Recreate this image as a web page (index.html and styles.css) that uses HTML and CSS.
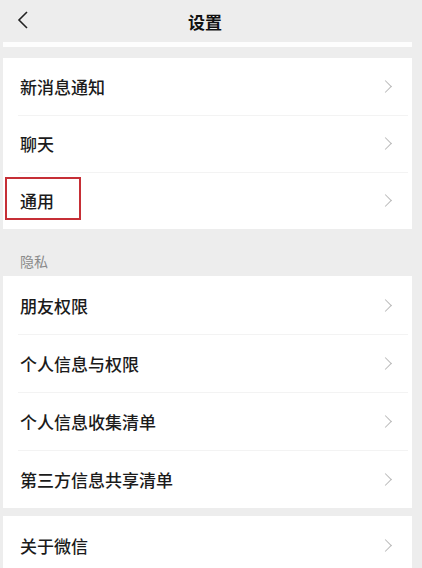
FILE: index.html
```html
<!DOCTYPE html>
<html lang="zh-CN">
<head>
  <meta charset="utf-8">
  <title>设置</title>
  <link rel="stylesheet" href="styles.css">
</head>
<body>
<div class="screen">
  <header class="topbar">
    <span class="back">
      <svg width="12" height="20" viewBox="0 0 12 20"><path d="M10 2 L2 10 L10 18" fill="none" stroke="#222" stroke-width="1.6"/></svg>
    </span>
    <h1>设置</h1>
  </header>
  <div class="strip"></div>

  <section class="card first">
    <div class="row"><span>新消息通知</span><i class="arrow"></i></div>
    <div class="row"><span>聊天</span><i class="arrow"></i></div>
    <div class="row mark"><span>通用</span><i class="arrow"></i><b class="redbox"></b></div>
  </section>

  <div class="label">隐私</div>

  <section class="card tall">
    <div class="row"><span>朋友权限</span><i class="arrow"></i></div>
    <div class="row"><span>个人信息与权限</span><i class="arrow"></i></div>
    <div class="row"><span>个人信息收集清单</span><i class="arrow"></i></div>
    <div class="row"><span>第三方信息共享清单</span><i class="arrow"></i></div>
  </section>

  <section class="card tall last">
    <div class="row"><span>关于微信</span><i class="arrow"></i></div>
  </section>
</div>
</body>
</html>
```

FILE: styles.css
```css
body {
  margin: 0;
  background-color: #ededed;
  font-family: "Noto Sans CJK SC", "Noto Sans", sans-serif;
  color: #1b1b1b;
}
.screen {
  width: 422px;
  height: 568px;
  overflow: hidden;
  padding: 0 10px 0 3px;
  box-sizing: border-box;
}
.topbar {
  position: relative;
  display: flex;
  align-items: center;
  justify-content: center;
  height: 42px;
}
.topbar h1 {
  margin: 0 5px 0 0;
  font-size: 17px;
  font-weight: 600;
  color: #111;
}
.back {
  position: absolute;
  left: 14px;
  top: 10px;
}
.back svg {
  display: block;
}
.strip {
  height: 5px;
  background-color: #fdfdfd;
  margin-bottom: 11px;
}
.card {
  background-color: #ffffff;
}
.last {
  margin-top: 8px;
}
.row {
  position: relative;
  display: flex;
  align-items: center;
  justify-content: space-between;
  height: 57px;
  padding: 0 20px 0 17px;
  font-size: 17px;
  font-weight: 500;
}
.tall .row {
  height: 58px;
}
.row + .row::before {
  content: "";
  position: absolute;
  top: 0;
  left: 15px;
  right: 4px;
  height: 1px;
  background-color: #f3f3f3;
}
.arrow {
  width: 8px;
  height: 8px;
  border-top: 1.5px solid #b9b9b9;
  border-right: 1.5px solid #b9b9b9;
  transform: rotate(45deg);
  margin-right: 2px;
}
.label {
  height: 47px;
  padding-left: 17px;
  padding-top: 22px;
  box-sizing: border-box;
  font-size: 14px;
  color: #8a8a8a;
}
.redbox {
  position: absolute;
  left: 2px;
  top: 5px;
  width: 72px;
  height: 39px;
  border: 2px solid #c62f36;
}
```
